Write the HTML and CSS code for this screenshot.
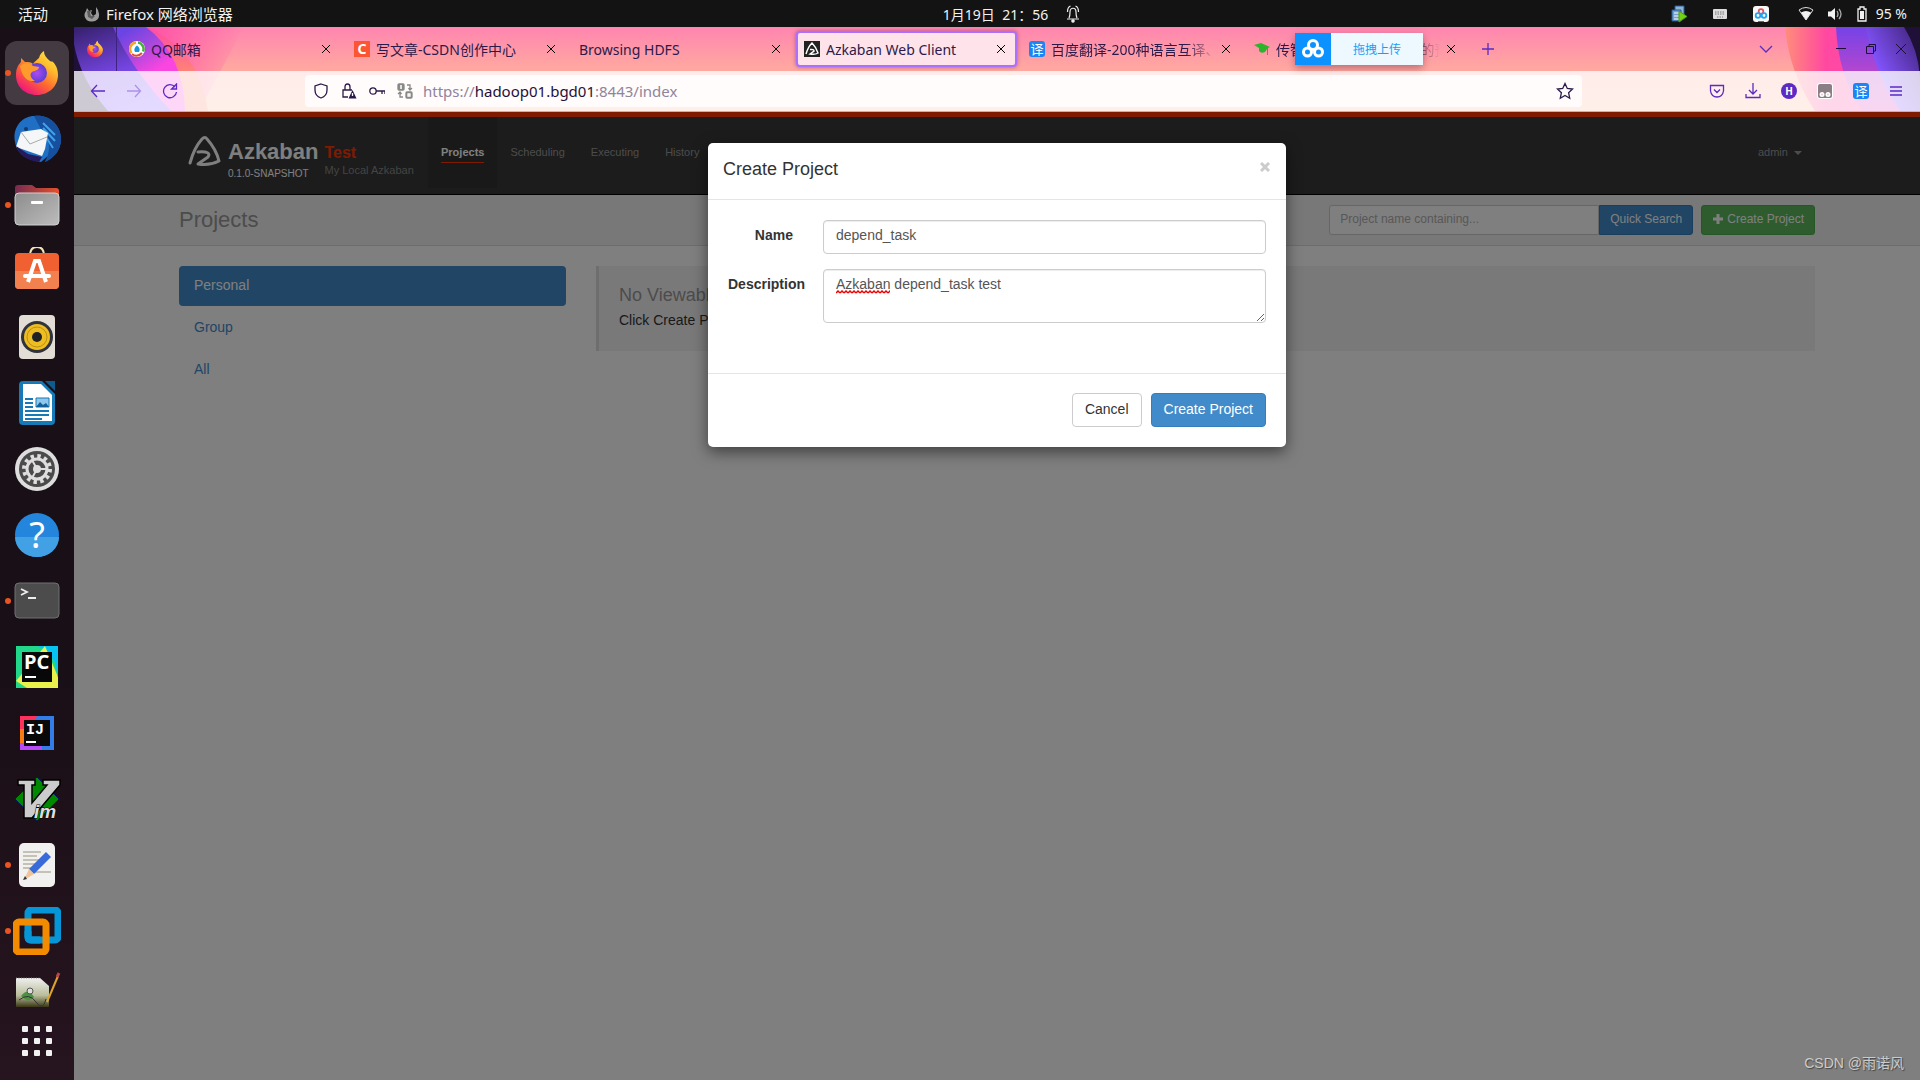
FILE: index.html
```
<!DOCTYPE html>
<html lang="zh">
<head>
  <meta charset="UTF-8">
  <title>Azkaban Web Client</title>
  <link rel="stylesheet" href="styles.css">
</head>
<body>
  <header class="topbar">
    <div class="top-left">
      <span>活动</span>
      <span class="top-app">
        <svg width="16" height="16" viewBox="0 0 16 16"><path d="M8 15.500A6.500 6.500 0 0 1 2 5l1-3 2 3 3-1-1 3 2 3 3-2 0-4 0-3 2 3 1 4a6.500 6.500 0 0 1-7 7.500z" fill="#9b9b9b"/><path d="M3 5l4 0-1 2 1 3h4l-3 3-4-2z" fill="#5c5c5c"/></svg>
        Firefox 网络浏览器
      </span>
    </div>
    <div class="top-clock">
      <span>1月19日&nbsp; 21：56</span>
      <svg width="14" height="18" viewBox="0 0 14 18" fill="none" stroke="#eee" stroke-width="1.200"><path d="M1 14h12M3 13c1-2 1-4 1-6 0-5 6-5 6 0 0 2 0 4 1 6M1.500 7q0-5 3-6M12.500 7q0-5-3-6"/><circle cx="7" cy="16" r="1.200" fill="#eee"/></svg>
    </div>
    <div class="top-tray">
      <svg width="16" height="18" viewBox="0 0 16 18"><path d="M4 1h9v9H4z" fill="#90b4d8" stroke="#245a94"/><path d="M1 5h9v11H1z" fill="#729fcf" stroke="#245a94"/><path d="M3 8h6M3 11h6M3 14h6" stroke="#fff"/><path d="M8 6l8 5.500L8 17z" fill="#73d216" stroke="#4e9a06"/></svg>
      <svg width="16" height="16" viewBox="0 0 16 16"><rect x="1" y="3" width="14" height="10" rx="1" fill="#ddd"/><path d="M3 6h10M3 8h10M5 11h6" stroke="#777" stroke-dasharray="1.500 1"/></svg>
      <svg width="16" height="16" viewBox="0 0 16 16"><rect width="16" height="16" rx="3" fill="#f7f7f7"/><g fill="none" stroke-width="1.800"><circle cx="8" cy="5.500" r="2.300" stroke="#e8505b"/><circle cx="5" cy="9.500" r="2.300" stroke="#23a4f2"/><circle cx="11" cy="9.500" r="2.300" stroke="#23a4f2"/></g><path d="M5 15.500h6" stroke="#e33"/></svg>
      <svg class="tray-wifi" width="16" height="14" viewBox="0 0 16 14"><path d="M1 3q7-5 14 0L8 13z" fill="none" stroke="#ddd"/><path d="M3 5.500q5-3 10 0L8 13z" fill="#f2f2f2"/></svg>
      <svg width="16" height="14" viewBox="0 0 16 14"><path d="M1 4.500h3L8 1v12L4 9.500H1z" fill="#f2f2f2"/><path d="M10 4q2 3 0 6M12 2q4 5 0 10" fill="none" stroke="#aaa" stroke-width="1.300"/></svg>
      <svg width="12" height="16" viewBox="0 0 12 16"><path d="M4 1h4v2h2v12H2V3h2z" fill="none" stroke="#f2f2f2" stroke-width="1.300"/><path d="M4 5h4v8H4z" fill="#f2f2f2"/></svg>
      <span>95 %</span>
    </div>
  </header>

  <div class="desktop">
    <nav class="dock">
      <a href="#" class="app running focused" aria-label="Firefox">
        <svg width="48" height="48" viewBox="0 0 48 48"><defs><linearGradient id="fx" x1="1" y1="0" x2=".3" y2="1"><stop offset="0" stop-color="#fff44f"/><stop offset=".35" stop-color="#ffbd2e"/><stop offset=".65" stop-color="#ff6a2e"/><stop offset="1" stop-color="#f0147e"/></linearGradient><radialGradient id="fxg"><stop offset="0" stop-color="#b04bf0"/><stop offset="1" stop-color="#5a3fd6"/></radialGradient></defs><path d="M24 46C11 46 3 37 3 26c0-6 2-10 5-13V9l4 4c3 0 6 0 8 2 2-3 4-4 6-6 1-4 3-6 5-7 0 5 3 7 6 10 1 1 2 0 3 1 4 4 5 9 5 13 0 11-9 20-21 20z" fill="url(#fx)"/><circle cx="24" cy="24" r="10" fill="url(#fxg)"/><path d="M7 17c5-4 10-3 13 0l6 1c0 3-5 4-7 5-3 2-1 7 3 9-8 1-13-4-15-15z" fill="#ff9a2d"/></svg>
      </a>
      <a href="#" class="app" aria-label="Thunderbird">
        <svg width="48" height="48" viewBox="0 0 48 48"><path d="M2 27C-1 13 9 1 21 1c15-2 27 9 27 23 0 11-7 19-16 23l3-6-7 6C11 44 4 38 2 27z" fill="#1f70c4"/><path d="M21 1c15-2 27 9 27 23 0 11-7 19-16 23 5-10 6-20-1-27z" fill="#164f9e"/><path d="M30 8l12 12M30 13l12 13M31 19l9 14" stroke="#3ea3e8" stroke-width="2"/><path d="M3 32l5-15 20-3 7 4-3 16-3 7z" fill="#f4f6f8"/><path d="M8 17l9 12 17-7" fill="none" stroke="#aaa"/><path d="M3 31l12 8 14 3-3 5C14 46 6 40 3 31z" fill="#241a5c"/><circle cx="13" cy="14" r="2" fill="#173c6c"/></svg>
      </a>
      <a href="#" class="app running" aria-label="Files">
        <svg width="48" height="48" viewBox="0 0 48 48"><defs><linearGradient id="fd"><stop offset="0" stop-color="#762c50"/><stop offset="1" stop-color="#e6512a"/></linearGradient><linearGradient id="fg" x1="0" y1="0" x2="1" y2="1"><stop offset="0" stop-color="#8d8d8d"/><stop offset="1" stop-color="#bcbcbc"/></linearGradient></defs><path d="M2 16V7q0-3 3-3h14l4 3h20q3 0 3 3v10z" fill="url(#fd)"/><rect x="2" y="12" width="44" height="32" rx="4" fill="url(#fg)" stroke="#d0d0d0"/><rect x="18" y="20" width="12" height="3" rx="1" fill="#fff"/></svg>
      </a>
      <a href="#" class="app" aria-label="Ubuntu Software">
        <svg width="48" height="48" viewBox="0 0 48 48"><path d="M17 9q0-9 7-9t7 9" fill="none" stroke="#f2dfb3" stroke-width="2"/><rect x="2" y="6" width="44" height="36" rx="4" fill="#f16030"/><path d="M2 24h44v14q0 4-4 4H6q-4 0-4-4z" fill="#f3814f"/><path d="M15 35l7-21h4l7 21" fill="none" stroke="#fff" stroke-width="4"/><path d="M12 29h24" stroke="#fff" stroke-width="4" stroke-linecap="round"/></svg>
      </a>
      <a href="#" class="app" aria-label="Rhythmbox">
        <svg width="48" height="48" viewBox="0 0 48 48"><rect x="6" y="2" width="36" height="44" rx="4" fill="#e3ded5"/><circle cx="24" cy="24" r="16" fill="#30333b"/><circle cx="24" cy="24" r="13" fill="#edbd22"/><circle cx="24" cy="24" r="10" fill="none" stroke="#bd9113"/><circle cx="24" cy="24" r="5" fill="#202226"/></svg>
      </a>
      <a href="#" class="app" aria-label="LibreOffice Writer">
        <svg width="48" height="48" viewBox="0 0 48 48"><path d="M10 2h19l13 13v27q0 4-4 4H10q-4 0-4-4V6q0-4 4-4z" fill="#1779b5"/><path d="M32 2h10v10z" fill="#0e5b90"/><path d="M10 5h18l11 11v26H10z" fill="#fff"/><path d="M12 20h8M12 24h8M12 28h8M12 32h24M12 36h24M12 40h17" stroke="#1779b5" stroke-width="2"/><path d="M23 19h13v9H23z" fill="#8fc8ec" stroke="#1779b5"/><path d="M23 28l4-5 3 3 3-2 3 4z" fill="#10629a"/></svg>
      </a>
      <a href="#" class="app" aria-label="Settings">
        <svg width="48" height="48" viewBox="0 0 48 48"><circle cx="24" cy="24" r="22" fill="#dedede"/><circle cx="24" cy="24" r="18" fill="#4b4b4b"/><circle cx="24" cy="24" r="13" fill="none" stroke="#dedede" stroke-width="4" stroke-dasharray="3.400 3.400"/><circle cx="24" cy="24" r="10" fill="none" stroke="#dedede" stroke-width="3"/><circle cx="24" cy="24" r="4" fill="#dedede"/><path d="M24 24h10M24 24l-5-9M24 24l-5 9" stroke="#dedede" stroke-width="2"/></svg>
      </a>
      <a href="#" class="app" aria-label="Help">
        <svg width="48" height="48" viewBox="0 0 48 48"><circle cx="24" cy="24" r="22" fill="#2385db"/><path d="M2 26h44a22 20 0 0 1-44 0z" fill="#42a0e5"/><text x="24" y="37" class="glyph-help">?</text></svg>
      </a>
      <a href="#" class="app running" aria-label="Terminal">
        <svg width="48" height="48" viewBox="0 0 48 48"><rect x="2" y="6" width="44" height="35" rx="4" fill="#4c4c4c" stroke="#707070"/><path d="M8 12l6 3-6 3M15 21h8" fill="none" stroke="#eee" stroke-width="1.800"/></svg>
      </a>
      <a href="#" class="app" aria-label="PyCharm">
        <svg width="48" height="48" viewBox="0 0 48 48"><path d="M3 3h42v42H3z" fill="#21d789"/><path d="M25 3h20v20L34 8z" fill="#07c3f2"/><path d="M32 3l13 31v11H14L3 38z" fill="#e9f24a"/><path d="M39 3h6v32z" fill="#07c3f2"/><path d="M9 9h30v30H9z" fill="#080808"/><text x="11" y="26" class="glyph-ide">PC</text><path d="M12 34h11" stroke="#fff" stroke-width="2"/></svg>
      </a>
      <a href="#" class="app" aria-label="IntelliJ IDEA">
        <svg width="48" height="48" viewBox="0 0 48 48"><path d="M7 7h34v34H7z" fill="#347de8"/><path d="M7 7h17L9 28 7 24z" fill="#fe315d"/><path d="M7 20l5 0v21H7z" fill="#f97a12"/><path d="M7 34h22v7H7z" fill="#b74af7"/><path d="M11 11h26v26H11z" fill="#090909"/><text x="13" y="25" class="glyph-ij">IJ</text><path d="M13 33h10" stroke="#fff" stroke-width="2"/></svg>
      </a>
      <a href="#" class="app" aria-label="Vim">
        <svg width="48" height="48" viewBox="0 0 48 48"><path d="M24 2l22 22-22 22L2 24z" fill="#008800" stroke="#001a66"/><path d="M5 5h17v5h-3v18L34 10h-4V5h17v5L19 43h-8V10H5z" fill="#ccc" stroke="#000" stroke-width="1.500"/><text x="21" y="43" class="glyph-vim">im</text></svg>
      </a>
      <a href="#" class="app running" aria-label="Text Editor">
        <svg width="48" height="48" viewBox="0 0 48 48"><rect x="6" y="2" width="36" height="44" rx="5" fill="#f1f1f0"/><path d="M10 11h18M10 15h14M10 19h18M10 23h13M10 27h10M22 31h16" stroke="#c6c1b6" stroke-width="2"/><path d="M16 28L33 11l5 5-17 17z" fill="#386bd8"/><path d="M16 28l5 5-10 6z" fill="#f0c497"/><path d="M12 35l-2 4 4-1z" fill="#333"/></svg>
      </a>
      <a href="#" class="app running" aria-label="VMware">
        <svg width="48" height="48" viewBox="0 0 48 48" fill="none" stroke-width="7"><rect x="15" y="3" width="30" height="30" rx="3" stroke="#0695d7"/><rect x="3" y="15" width="30" height="30" rx="3" stroke="#f38b00"/><path d="M15 24v6q0 3 3 3h9" stroke="#0695d7"/></svg>
      </a>
      <a href="#" class="app app-cut" aria-label="Notepadqq">
        <svg width="48" height="48" viewBox="0 0 48 48"><defs><linearGradient id="np" x1="0" y1="0" x2="0" y2="1"><stop offset="0" stop-color="#f0f0f0"/><stop offset=".6" stop-color="#b9bd9a"/><stop offset="1" stop-color="#3b3716"/></linearGradient></defs><path d="M3 8h24l9 8v21H3z" fill="url(#np)"/><path d="M3 8h24" stroke="#777" stroke-dasharray="1 1.500"/><path d="M8 26q7-9 13 1-5 7-13-1z" fill="#4d9143"/><path d="M6 30q10-8 17 2t10-3" fill="none" stroke="#333"/><circle cx="17" cy="21" r="3" fill="#ddd" stroke="#555"/><path d="M34 32L45 6" stroke="#dda32a" stroke-width="2"/><path d="M44 7l2-4" stroke="#b44" stroke-width="3"/></svg>
      </a>
      <button class="app-grid" aria-label="显示应用程序">
        <svg width="32" height="32" viewBox="0 0 32 32" fill="#f2f2f2"><rect x="1" y="1" width="6" height="6" rx="1"/><rect x="13" y="1" width="6" height="6" rx="1"/><rect x="25" y="1" width="6" height="6" rx="1"/><rect x="1" y="13" width="6" height="6" rx="1"/><rect x="13" y="13" width="6" height="6" rx="1"/><rect x="25" y="13" width="6" height="6" rx="1"/><rect x="1" y="25" width="6" height="6" rx="1"/><rect x="13" y="25" width="6" height="6" rx="1"/><rect x="25" y="25" width="6" height="6" rx="1"/></svg>
      </button>
    </nav>

    <div class="browser">
      <div class="chrome">
        <!-- theme artwork behind the tabs -->
        <svg class="art art-left" width="180" height="84" viewBox="0 0 180 84"><defs><linearGradient id="al"><stop offset="0" stop-color="#ff4aa5"/><stop offset="1" stop-color="#ff4aa5" stop-opacity="0"/></linearGradient><linearGradient id="ao" x1="0" y1="0" x2="0" y2="1"><stop offset="0" stop-color="#ff4aa5"/><stop offset=".6" stop-color="#ff8a72"/></linearGradient><linearGradient id="am" x1=".3" y1="0" x2=".7" y2=".7"><stop offset="0" stop-color="#6a44e4"/><stop offset=".35" stop-color="#a548dd"/><stop offset=".75" stop-color="#fb45e0"/></linearGradient><linearGradient id="av" x1="0" y1="0" x2=".4" y2="1"><stop offset="0" stop-color="#35206b"/><stop offset=".6" stop-color="#7445e0"/><stop offset="1" stop-color="#8354ff"/></linearGradient></defs><path d="M60 0h110L125 84z" fill="url(#al)"/><path d="M72 0q53 22 62 84H80z" fill="url(#ao)"/><path d="M36 0h36q38 28 39 84H60z" fill="url(#am)"/><path d="M0 0h39q18 42 58 84H0z" fill="url(#av)"/><path d="M0 17q6 35 34 67H0z" fill="#1f1038"/></svg>
        <svg class="art art-right" width="180" height="84" viewBox="0 0 180 84"><defs><linearGradient id="ar"><stop offset="0" stop-color="#ff8d7a"/><stop offset=".3" stop-color="#ff49a0"/><stop offset="1" stop-color="#fb45bd"/></linearGradient><linearGradient id="aw" x1="0" y1="0" x2="0" y2="1"><stop offset="0" stop-color="#7443e8"/><stop offset=".5" stop-color="#b046d0"/><stop offset="1" stop-color="#e046c0"/></linearGradient><linearGradient id="as" x1="1" y1="0" x2=".3" y2=".6"><stop offset="0" stop-color="#3c2070"/><stop offset="1" stop-color="#8354ff"/></linearGradient></defs><path d="M45 0q4 45 30 84h105V0z" fill="url(#ar)"/><path d="M96 0q2 48 26 84h58V0z" fill="url(#aw)"/><path d="M126 0q8 45 34 84h20V0z" fill="url(#as)"/><path d="M164 0q14 22 16 50V0z" fill="#1f1038"/></svg>

        <div class="tabs">
          <a href="#" class="tab-home" aria-label="Firefox View"><svg width="18" height="18" viewBox="0 0 48 48"><path d="M24 46C11 46 3 37 3 26c0-6 2-10 5-13V9l4 4c3 0 6 0 8 2 2-3 4-4 6-6 1-4 3-6 5-7 0 5 3 7 6 10 4 4 8 9 8 14 0 11-9 20-21 20z" fill="url(#fx)"/><circle cx="24" cy="24" r="10" fill="url(#fxg)"/><path d="M7 17c5-4 10-3 13 0l6 1c0 3-5 4-7 5-3 2-1 7 3 9-8 1-13-4-15-15z" fill="#ff9a2d"/></svg></a>
          <div class="tab"><svg width="16" height="16" viewBox="0 0 16 16"><circle cx="8" cy="8" r="8" fill="#fff"/><path d="M2.500 12A6.500 6.500 0 0 1 7 1.500" fill="none" stroke="#f6a623" stroke-width="2.500"/><path d="M9 1.500a6.500 6.500 0 0 1 5 9" fill="none" stroke="#4aaf3b" stroke-width="2.500"/><path d="M3 13q5 4 10-1" fill="none" stroke="#e64a2e" stroke-width="2"/><path d="M8 4.500q4 3 2 6.500H6q-2-3.500 2-6.500z" fill="#1595e0"/></svg><span>QQ邮箱</span><button aria-label="关闭"><svg width="10" height="10" viewBox="0 0 10 10"><path d="M1 1l8 8M9 1L1 9"/></svg></button></div>
          <div class="tab"><i class="fav fav-c">C</i><span>写文章-CSDN创作中心</span><button aria-label="关闭"><svg width="10" height="10" viewBox="0 0 10 10"><path d="M1 1l8 8M9 1L1 9"/></svg></button></div>
          <div class="tab"><span>Browsing HDFS</span><button aria-label="关闭"><svg width="10" height="10" viewBox="0 0 10 10"><path d="M1 1l8 8M9 1L1 9"/></svg></button></div>
          <div class="tab tab-active"><svg width="16" height="16" viewBox="0 0 16 16"><rect width="16" height="16" fill="#222"/><path d="M2 13Q4 6 8 2q4 4 6 10-3 2-8 1l4-3q0-2-4-1.500" fill="none" stroke="#fff" stroke-width="1.500"/></svg><span>Azkaban Web Client</span><button aria-label="关闭"><svg width="10" height="10" viewBox="0 0 10 10"><path d="M1 1l8 8M9 1L1 9"/></svg></button></div>
          <div class="tab"><i class="fav fav-yi">译</i><span class="fade">百度翻译-200种语言互译、</span><button aria-label="关闭"><svg width="10" height="10" viewBox="0 0 10 10"><path d="M1 1l8 8M9 1L1 9"/></svg></button></div>
          <div class="tab"><svg width="16" height="16" viewBox="0 0 16 16"><path d="M0 4l7-2 9 4-2 1v7h-1V8l-2 3q-4 2-6-1V7z" fill="#2bb52b"/></svg><span class="fade">传智教育-大数据课程班的预习</span><button aria-label="关闭"><svg width="10" height="10" viewBox="0 0 10 10"><path d="M1 1l8 8M9 1L1 9"/></svg></button>
            <div class="upload">
              <svg width="36" height="32" viewBox="0 0 36 32"><rect width="36" height="32" fill="#0c92ff"/><g fill="none" stroke="#fff" stroke-width="3"><circle cx="18" cy="12" r="4.500"/><circle cx="12.500" cy="19" r="4"/><circle cx="23.500" cy="19" r="4"/></g></svg>
              <span>拖拽上传</span>
            </div>
          </div>
          <button class="tab-new" aria-label="新标签页"><svg width="14" height="14" viewBox="0 0 14 14"><path d="M7 1v12M1 7h12"/></svg></button>
          <div class="win">
            <button class="win-list" aria-label="列出标签页"><svg width="14" height="14" viewBox="0 0 14 14"><path d="M1 4l6 6 6-6"/></svg></button>
            <button aria-label="最小化"><svg width="12" height="12" viewBox="0 0 12 12"><path d="M1 5.500h10"/></svg></button>
            <button aria-label="还原"><svg width="12" height="12" viewBox="0 0 12 12"><path d="M1.500 3.500h7v7h-7zM4 3V1.500h6.500V8H9"/></svg></button>
            <button aria-label="关闭窗口"><svg width="12" height="12" viewBox="0 0 12 12"><path d="M1 1l10 10M11 1L1 11"/></svg></button>
          </div>
        </div>

        <div class="navrow">
          <div class="nav-buttons">
            <button aria-label="后退"><svg width="16" height="16" viewBox="0 0 16 16"><path d="M15 8H2M7 2L1.500 8 7 14"/></svg></button>
            <button class="dim" aria-label="前进"><svg width="16" height="16" viewBox="0 0 16 16"><path d="M1 8h13M9 2l5.500 6L9 14"/></svg></button>
            <button aria-label="刷新"><svg width="16" height="16" viewBox="0 0 16 16"><path d="M13 4A6.500 6.500 0 1 0 14.500 9M14.500 1v5h-5z"/></svg></button>
          </div>
          <div class="url">
            <svg width="16" height="16" viewBox="0 0 16 16"><path d="M8 1l6 2v4q0 6-6 8-6-2-6-8V3z"/></svg>
            <svg width="16" height="16" viewBox="0 0 16 16"><path d="M7 14H2V7h9M4 7V4q0-3 2.500-3T9 4v3"/><path d="M11.500 7l4 8.500h-8z" fill="#2b1a4a" stroke="none"/><path d="M11.500 10v3" stroke="#fff"/></svg>
            <svg width="16" height="16" viewBox="0 0 16 16"><circle cx="4" cy="8" r="3.200"/><path d="M7 8h9v3M13 8v3"/></svg>
            <svg class="translate" width="16" height="16" viewBox="0 0 16 16"><rect x="1" y="1" width="6" height="6" rx="1" fill="#888"/><rect x="9" y="9" width="6" height="6" rx="1" fill="#888"/><path d="M3 3h2M3 5h2M11 11h2v2h-2z" stroke="#fff"/><path d="M10 2h3v4M11.500 5L13 7l2-2M6 14H3v-4M1 11l2-2 1.500 2"/></svg>
            <span class="url-text">https://<b>hadoop01.bgd01</b>:8443/index</span>
            <svg width="18" height="18" viewBox="0 0 18 18"><path d="M9 1.500l2.300 5 5.200.6-3.900 3.600 1.100 5.500L9 13.500l-4.700 2.700 1.100-5.500L1.500 7.100l5.200-.6z"/></svg>
          </div>
          <div class="tools">
            <svg width="16" height="16" viewBox="0 0 16 16"><path d="M1.500 2.500h13V8q-1 6-6.500 6-5.500 0-6.500-6zM5 6.500l3 3 3-3"/></svg>
            <svg width="16" height="16" viewBox="0 0 16 16"><path d="M8 0v11M4 7l4 4 4-4M1 11v3.500h14V11"/></svg>
            <i class="avatar">H</i>
            <svg class="monkey" width="16" height="16" viewBox="0 0 16 16"><rect width="16" height="16" rx="3" fill="#fff"/><rect x="1" y="1" width="14" height="14" rx="2" fill="#8a7f84"/><circle cx="5" cy="11.500" r="2.500" fill="#fff"/><circle cx="11" cy="11.500" r="2.500" fill="#fff"/><circle cx="5" cy="11.500" r="1" fill="#e9c9cf"/><circle cx="11" cy="11.500" r="1" fill="#e9c9cf"/></svg>
            <i class="fav fav-yi">译</i>
            <svg width="14" height="16" viewBox="0 0 14 16"><path d="M1 4h12M1 8h12M1 12h12"/></svg>
          </div>
        </div>
      </div>

      <div class="page">
        <div class="navbar">
          <div class="brand">
            <svg width="36" height="38" viewBox="0 0 36 38"><path d="M4 32Q8 17 16 8q3-3 5 0 9 10 12 22-10 5-21 3l10-7q4-6-10-5" fill="none" stroke="#fff" stroke-width="3" stroke-linejoin="round" stroke-linecap="round"/></svg>
            <div>
              <strong class="brand-name">Azkaban</strong>
              <span class="brand-version">0.1.0-SNAPSHOT</span>
            </div>
            <div class="brand-env">
              <strong class="brand-test">Test</strong>
              <span class="brand-label">My Local Azkaban</span>
            </div>
          </div>
          <nav class="menu">
            <a href="#" class="active"><span>Projects</span></a>
            <a href="#">Scheduling</a>
            <a href="#">Executing</a>
            <a href="#">History</a>
          </nav>
          <a href="#" class="user">admin <i class="caret"></i></a>
        </div>

        <div class="subhead">
          <h1>Projects</h1>
          <form class="search">
            <input type="text" placeholder="Project name containing..." aria-label="Project name">
            <button type="button" class="btn btn-primary btn-sm">Quick Search</button>
          </form>
          <button class="btn btn-success btn-sm"><svg width="12" height="12" viewBox="0 0 12 12"><path d="M6 1v10M1 6h10" stroke="#fff" stroke-width="3"/></svg> Create Project</button>
        </div>

        <div class="content">
          <ul class="pills">
            <li><a href="#" class="active">Personal</a></li>
            <li><a href="#">Group</a></li>
            <li><a href="#">All</a></li>
          </ul>
          <div class="callout">
            <h4>No Viewable Projects</h4>
            <p>Click Create Projects to create a new project.</p>
          </div>
        </div>

        <div class="backdrop">
          <div class="modal" role="dialog" aria-labelledby="modalTitle">
            <div class="modal-header">
              <h4 id="modalTitle">Create Project</h4>
              <button class="close" aria-label="Close"><svg width="10" height="10" viewBox="0 0 10 10"><path d="M1 1l8 8M9 1L1 9" stroke="#ccc" stroke-width="3"/></svg></button>
            </div>
            <div class="modal-body">
              <div class="field">
                <label for="name">Name</label>
                <input type="text" id="name" value="depend_task">
              </div>
              <div class="field">
                <label for="description">Description</label>
                <div class="area">
                  <textarea id="description" rows="2" spellcheck="false">Azkaban depend_task test</textarea>
                  <svg class="squiggle" width="54" height="4"><defs><pattern id="wave" width="4" height="4" patternUnits="userSpaceOnUse"><path d="M0 3l2-2 2 2" fill="none" stroke="#e00" stroke-width="1.500"/></pattern></defs><rect width="54" height="4" fill="url(#wave)"/></svg>
                </div>
              </div>
            </div>
            <div class="modal-footer">
              <button class="btn btn-default">Cancel</button>
              <button class="btn btn-primary">Create Project</button>
            </div>
          </div>
        </div>
        <div class="watermark">CSDN @雨诺风</div>
      </div>
    </div>
  </div>
</body>
</html>
```

FILE: styles.css
```
* {
  box-sizing: border-box;
}

body {
  margin: 0;
  min-height: 100vh;
  display: flex;
  flex-direction: column;
  font-family: "Noto Sans", "Noto Sans CJK SC", sans-serif;
  font-size: 14px;
  background: #190f16;
}

button {
  font-family: inherit;
  padding: 0;
  border: 0;
  background: none;
  display: flex;
  align-items: center;
  justify-content: center;
}

a {
  text-decoration: none;
}

svg {
  flex: none;
}

/* system bar */
.topbar {
  height: 27px;
  display: grid;
  grid-template-columns: 1fr auto 1fr;
  align-items: center;
  padding: 0 13px 0 18px;
  background: #131313;
  color: #f2f2f2;
  white-space: nowrap;
}

.top-left, .top-app, .top-clock, .top-tray {
  display: flex;
  align-items: center;
}

.top-left {
  gap: 36px;
  font-size: 15px;
}

.top-app {
  gap: 6px;
}

.top-clock {
  gap: 18px;
  margin-left: 98px;
}

.top-tray {
  justify-content: flex-end;
  gap: 13px;
}

.top-tray svg:nth-child(-n+2) {
  margin-right: 12px;
}

.tray-wifi {
  margin-left: 16px;
}

.top-tray span {
  margin-left: -5px;
}

.desktop {
  flex: 1;
  display: flex;
}

/* dock */
.dock {
  width: 74px;
  padding-top: 13px;
  display: flex;
  flex-direction: column;
  align-items: center;
  background: linear-gradient(#190f16 60%, #26141f);
}

.app {
  position: relative;
  width: 74px;
  height: 66px;
  display: flex;
  align-items: center;
  justify-content: center;
}

.focused svg {
  box-sizing: content-box;
  padding: 8px;
  border-radius: 12px;
  background: #443a41;
}

.running::before {
  content: "";
  position: absolute;
  left: 5px;
  top: 30px;
  width: 6px;
  height: 6px;
  border-radius: 50%;
  background: #e95420;
}

.app-cut {
  height: 44px;
  align-items: flex-start;
  padding-top: 6px;
  overflow: hidden;
}

.app-grid {
  margin-top: 17px;
}

.glyph-help {
  font: 36px "Noto Sans", sans-serif;
  fill: #fff;
  text-anchor: middle;
}

.glyph-ide {
  font: bold 20px "Noto Sans", sans-serif;
  fill: #fff;
}

.glyph-ij {
  font: bold 15px "Liberation Mono", monospace;
  fill: #fff;
}

.glyph-vim {
  font: italic bold 19px "Liberation Sans", sans-serif;
  fill: #ddd;
  stroke: #000;
  stroke-width: 1px;
  paint-order: stroke;
}

/* browser */
.browser {
  flex: 1;
  min-width: 0;
  display: flex;
  flex-direction: column;
}

.chrome {
  position: relative;
  z-index: 1;
  background: linear-gradient(#ff85b0, #ffa8a0 50%, #ffb89a);
  color: #2b1a4a;
  border-bottom: 1px solid #c9b0a8;
}

.art {
  position: absolute;
  top: 0;
}

.art-left {
  left: 0;
}

.art-right {
  right: 0;
}

.chrome button svg, .url svg, .tools svg {
  fill: none;
  stroke: currentColor;
  stroke-width: 1.3px;
}

.tabs {
  position: relative;
  z-index: 1;
  height: 44px;
  display: flex;
  align-items: center;
}

.tab-home {
  width: 43px;
  height: 44px;
  margin-right: 2px;
  display: flex;
  align-items: center;
  justify-content: center;
  border-right: 1px solid #3e2480;
}

.tab {
  position: relative;
  width: 221px;
  height: 36px;
  margin: 0 2px;
  padding: 0 11px 0 8px;
  display: flex;
  align-items: center;
  gap: 6px;
}

.tab span {
  flex: 1;
  white-space: nowrap;
  overflow: hidden;
}

.tab button svg {
  stroke-width: 1px;
}

.tab-active {
  background: #fee3ea;
  border: 2px solid #ac70ff;
  border-radius: 4px;
  padding: 0 9px 0 6px;
  box-shadow: 0 0 4px rgba(90, 20, 90, 0.5);
}

.tab .fade {
  -webkit-mask-image: linear-gradient(90deg, #000 82%, transparent);
  mask-image: linear-gradient(90deg, #000 82%, transparent);
}

.fav {
  flex: none;
  width: 16px;
  height: 16px;
  font-style: normal;
  line-height: 16px;
  text-align: center;
  color: #fff;
}

.fav-c {
  background: #fc5531;
  font-weight: bold;
}

.fav-yi {
  background: #1a86f5;
  border-radius: 3px;
  font-size: 13px;
}

.tab .upload {
  position: absolute;
  left: 49px;
  top: 2px;
  width: 128px;
  height: 32px;
  display: flex;
  align-items: center;
  background: #edf8ff;
  color: #1a9df5;
  font-size: 12px;
  text-align: center;
  box-shadow: 0 3px 8px rgba(80, 20, 40, 0.4);
}

.tab-new {
  width: 38px;
  color: #5b2bc4;
}

.win {
  margin-left: auto;
  padding-right: 13px;
  display: flex;
  align-items: center;
  gap: 18px;
}

.win-list {
  margin-right: 44px;
  color: #5b2bc4;
}

.win button:not(.win-list) {
  color: #1f1038;
}

.win button:not(.win-list) svg {
  stroke-width: 1px;
}

.navrow {
  position: relative;
  height: 40px;
  padding: 0 17px 0 16px;
  display: flex;
  align-items: center;
  background: rgba(255, 255, 255, 0.78);
}

.nav-buttons {
  display: flex;
  gap: 20px;
  width: 215px;
}

.nav-buttons button, .tools {
  color: #5b2bc4;
}

.nav-buttons .dim {
  opacity: 0.4;
}

.url {
  flex: 1;
  height: 32px;
  margin-right: 127px;
  padding: 0 8px;
  display: flex;
  align-items: center;
  gap: 12px;
  background: #fffcfb;
  border-radius: 4px;
}

.url .translate {
  stroke: #888;
}

.url-text {
  flex: 1;
  margin-left: -2px;
  color: #8f849c;
  font-size: 15px;
}

.url-text b {
  font-weight: normal;
  color: #1f1038;
}

.tools {
  display: flex;
  align-items: center;
  gap: 20px;
}

.tools .monkey {
  stroke: none;
}

.avatar {
  width: 16px;
  height: 16px;
  border-radius: 50%;
  background: #5b2bc4;
  color: #fff;
  font-size: 10px;
  font-style: normal;
  font-weight: bold;
  line-height: 16px;
  text-align: center;
}

/* azkaban */
.page {
  position: relative;
  flex: 1;
  background: #fff;
  color: #333;
  font-family: "Liberation Sans", "Noto Sans CJK SC", sans-serif;
  font-size: 14px;
  line-height: 20px;
}

.navbar {
  height: 83px;
  padding: 0 105px;
  display: flex;
  border-top: 5px solid #ff3601;
  border-bottom: 1px solid #000;
  background: #383838;
}

.brand {
  width: 249px;
  padding: 14px 0 0 7px;
  display: flex;
  gap: 6px;
}

.brand > div {
  display: flex;
  flex-direction: column;
  padding-top: 8px;
  white-space: nowrap;
}

.brand-name {
  color: #fff;
  font-size: 22px;
  line-height: 26px;
}

.brand-version {
  color: #fff;
  font-size: 10px;
  line-height: 18px;
}

.brand .brand-env {
  padding-top: 12px;
}

.brand-test {
  color: #ff3601;
  font-size: 16px;
  line-height: 20px;
}

.brand-label {
  color: #888;
  font-size: 11px;
  line-height: 14px;
}

.menu {
  display: flex;
  height: 71px;
}

.menu a, .user {
  padding: 25px 13px 0;
  color: #999;
  font-size: 11px;
}

.menu .active {
  background: #323232;
  color: #fff;
  font-weight: bold;
}

.menu .active span {
  display: block;
  border-bottom: 1px solid #ff3601;
}

.user {
  margin-left: auto;
}

.caret {
  display: inline-block;
  margin-left: 3px;
  border: 4px solid transparent;
  border-top-color: #999;
  border-bottom: 0;
  vertical-align: middle;
}

.subhead {
  height: 51px;
  padding: 10px 105px 0;
  display: flex;
  align-items: flex-start;
  background: #f0f0f0;
  border-bottom: 1px solid #dadada;
}

h1 {
  margin: 0;
  font-size: 22px;
  font-weight: normal;
  line-height: 30px;
  color: #999;
}

.search {
  margin: 0 8px 0 auto;
  display: flex;
}

.search input {
  width: 270px;
  height: 30px;
  padding: 0 10px 2px;
  border: 1px solid #ccc;
  border-radius: 3px 0 0 3px;
  font: 12px "Liberation Sans", sans-serif;
}

.search input::placeholder {
  color: #b0b0b0;
}

.search .btn {
  border-radius: 0 3px 3px 0;
}

.btn {
  height: 34px;
  padding: 0 12px 3px;
  border: 1px solid #ccc;
  border-radius: 4px;
  background: #fff;
  color: #333;
  font-size: 14px;
}

.btn-sm {
  height: 30px;
  padding: 0 10px 2px;
  border-radius: 3px;
  font-size: 12px;
  gap: 3px;
}

.btn-primary {
  background: #428bca;
  border-color: #357ebd;
  color: #fff;
}

.btn-success {
  background: #5cb85c;
  border-color: #4cae4c;
  color: #fff;
}

.content {
  padding: 20px 105px;
  display: grid;
  grid-template-columns: 387px 1fr;
  gap: 30px;
  align-items: start;
}

.pills {
  margin: 0;
  padding: 0;
  list-style: none;
  display: flex;
  flex-direction: column;
  gap: 2px;
}

.pills a {
  display: block;
  padding: 9px 15px 11px;
  border-radius: 4px;
  color: #428bca;
}

.pills .active {
  background: #428bca;
  color: #fff;
}

.callout {
  padding: 19px 20px 21px;
  border-left: 3px solid #ddd;
  background: #f3f3f3;
}

h4 {
  margin: 0;
  font-size: 18px;
  font-weight: normal;
}

.callout h4 {
  color: #999;
  margin-bottom: 5px;
}

.callout p {
  margin: 0;
}

/* dialog */
.backdrop {
  position: absolute;
  inset: 0;
  padding-top: 31px;
  background: rgba(0, 0, 0, 0.5);
}

.modal {
  max-width: 578px;
  margin: 0 auto;
  background: #fff;
  border-radius: 5px;
  box-shadow: 0 5px 15px rgba(0, 0, 0, 0.5);
}

.modal-header {
  padding: 16px 15px 20px;
  display: flex;
  justify-content: space-between;
  border-bottom: 1px solid #e5e5e5;
}

.close {
  width: 12px;
  height: 16px;
}

.modal-body {
  padding: 20px 20px 35px;
}

.field {
  display: grid;
  grid-template-columns: 65px 1fr;
  gap: 30px;
  margin-bottom: 15px;
}

.field label {
  padding-top: 5px;
  font-weight: bold;
  text-align: right;
}

.field input, .field textarea {
  display: block;
  width: 100%;
  height: 34px;
  padding: 4px 12px 8px;
  border: 1px solid #ccc;
  border-radius: 4px;
  box-shadow: inset 0 1px 1px rgba(0, 0, 0, 0.075);
  color: #555;
  font: 14px/20px "Liberation Sans", sans-serif;
}

.field textarea {
  height: 54px;
}

.area {
  position: relative;
}

.squiggle {
  position: absolute;
  left: 13px;
  top: 21px;
}

.modal-footer {
  padding: 19px 20px 20px;
  display: flex;
  justify-content: flex-end;
  gap: 9px;
  border-top: 1px solid #e5e5e5;
}

.watermark {
  position: absolute;
  right: 16px;
  bottom: 7px;
  color: #ccc;
  font-size: 14px;
  text-shadow: 1px 1px 1px #444;
}
```
